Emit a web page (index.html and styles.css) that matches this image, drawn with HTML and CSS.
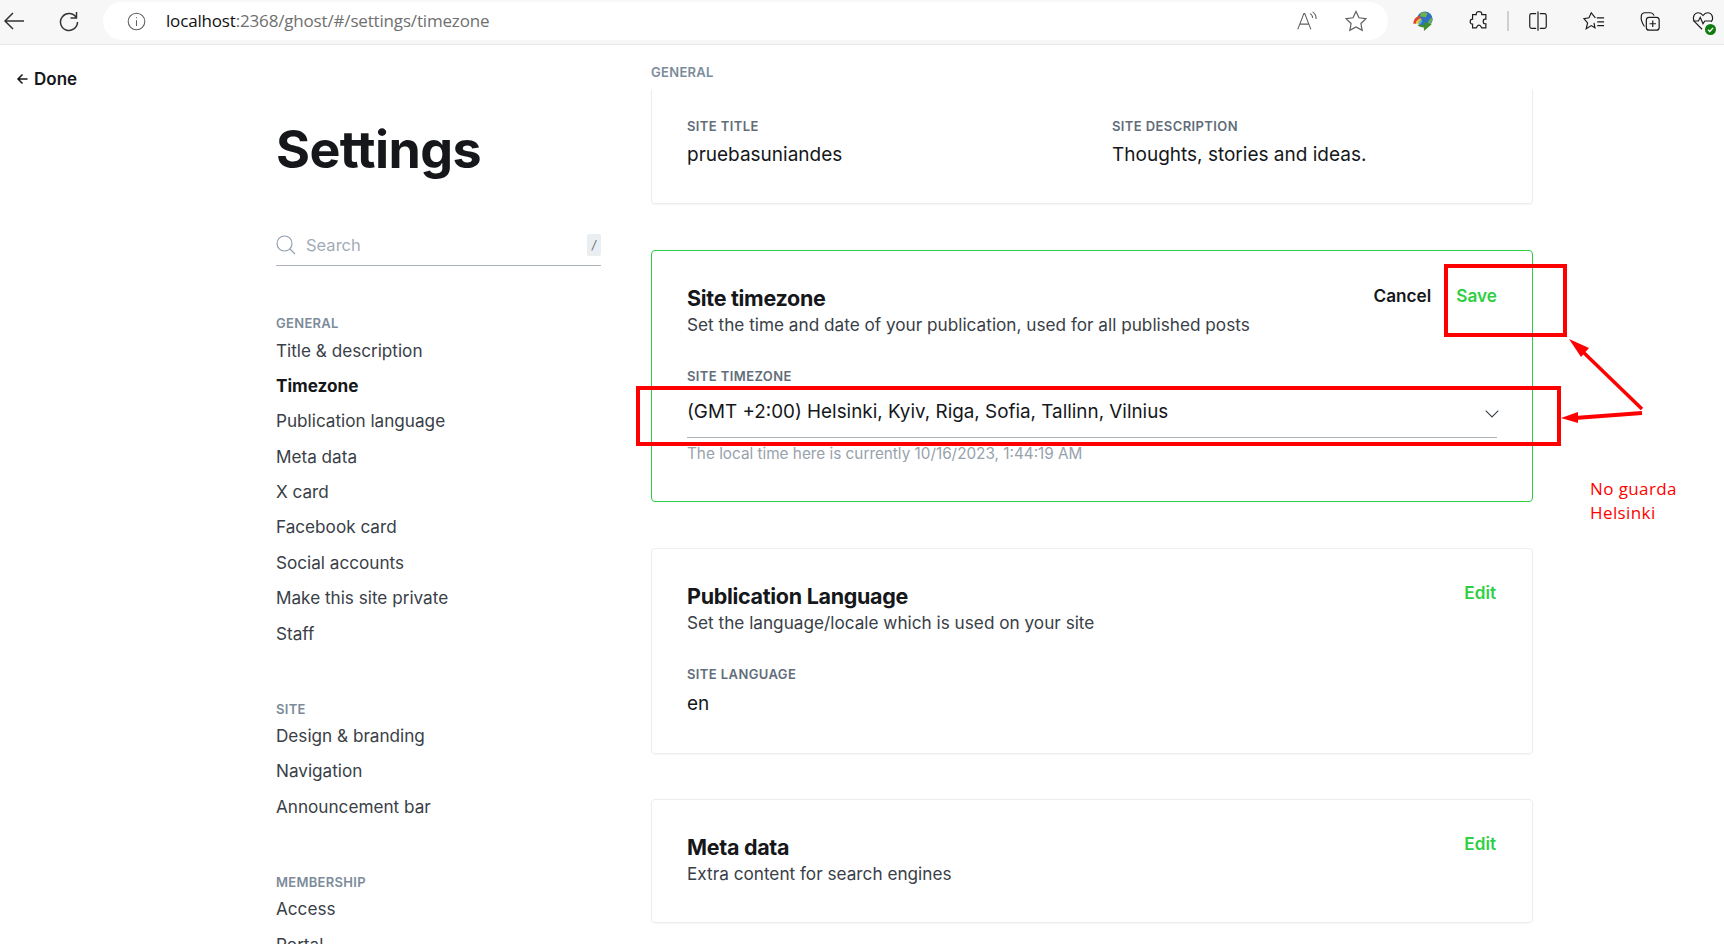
FILE: index.html
```html
<!DOCTYPE html>
<html lang="en">
<head>
    <meta charset="UTF-8">
    <title>Settings</title>
    <link rel="stylesheet" href="styles.css">
</head>
<body>

    <header class="topbar">
        <svg class="nav-icon" viewBox="0 0 24 24"><path d="M22 12H3M11 4l-8 8 8 8"/></svg>
        <svg class="nav-icon reload" viewBox="0 0 24 24"><path d="M19.5 9A8.5 8.5 0 1 0 20.5 13M19.5 3v6h-6"/></svg>
        <div class="address">
            <svg class="addr-icon" viewBox="0 0 24 24"><circle cx="12" cy="12" r="9.5"/><path d="M12 10.5V17M12 7v1.4"/></svg>
            <span class="url"><b>localhost</b>:2368/ghost/#/settings/timezone</span>
            <svg class="addr-icon read" viewBox="0 0 24 24"><path d="M2 21L9 3h1l7 18M4.800 15h10M16 3c2 1 3 3 3 5M19 1c3 2 4 5 4 8"/></svg>
            <svg class="addr-icon star" viewBox="0 0 24 24"><path d="M12 2.500l3 6.300 6.900 .9-5 4.800 1.300 6.900-6.200-3.400-6.200 3.400 1.300-6.900-5-4.800 6.900-.9z"/></svg>
        </div>
        <div class="tools">
            <svg class="tool idm" viewBox="0 0 24 24">
                <circle class="idm-blue" cx="14" cy="10" r="8.500"/>
                <path class="idm-green" d="M9 4c2-2 6-2 8 0l-2 4-6-1zM17 14l4-6 1 3-2 5z"/>
                <path class="idm-red" d="M1.500 15c0-5 3-8 7-8.500l1 2.500c-3 .5-5 3-5 6z"/>
                <path class="idm-yellow" d="M4.500 15c0-3 2-5.500 5-6l1 2c-2 .5-3 2-3 4z"/>
                <path class="idm-cyan" d="M7.500 15c0-2 1-3.500 3-4l1 1.500c-1 .5-1.500 1-1.500 2.500z"/>
                <path class="idm-arrow" d="M6 16h8l-.5-3 8 2.500-8.500 7.500v-4c-3 0-6-1-7-3z"/>
            </svg>
            <svg class="tool puzzle" viewBox="0 0 24 24"><path d="M9 4c0-3 6-3 6 0v1h4.500v5h-1c-2.500 0-2.500 5 0 5h1v4.500H15c-1-1-1-3-3-3s-2 2-3 3H5v-4c-3.500 0-3.500-5.500 0-5.500V5h4z"/></svg>
            <span class="divider"></span>
            <svg class="tool" viewBox="0 0 24 24"><path d="M10 4H5a2 2 0 0 0-2 2v12a2 2 0 0 0 2 2h5M14 4h5a2 2 0 0 1 2 2v12a2 2 0 0 1-2 2h-5M12 1.500v21"/></svg>
            <svg class="tool" viewBox="0 0 24 24"><path d="M13.500 8.500L9 3 6.500 8.500 1 9.500l4 4.500-1.500 6.500 5.500-3.500 4 2.500-1-5.500M15 8.500h8M15.500 13h7.500M15.500 17h7.500"/></svg>
            <svg class="tool coll" viewBox="0 0 24 24"><path d="M6 18C3 14 2 10 2.500 6.500c.3-2 2-3.500 4-3.500h6c2 0 3 1 4 3"/><rect x="8" y="8" width="14" height="14" rx="3"/><path d="M15 11.500v7M11.500 15h7"/></svg>
            <span class="tool-wrap">
                <svg class="tool" viewBox="0 0 24 24"><path d="M11 21L3 13C0 9 2 3 7 3c2 0 3.500 1 5 3 1.500-2 3-3 5-3 5 0 7 6 4 10M1 12h6l2-4 3 7 2-3h8"/></svg>
                <svg class="badge" viewBox="0 0 12 12"><circle class="badge-bg" cx="6" cy="6" r="6"/><path d="M3.300 6.200l2 2 3.500-4"/></svg>
            </span>
        </div>
    </header>

    <div class="layout">
        <div class="back-col">
            <a class="done" href="#">
                <svg class="done-arrow" viewBox="0 0 12 12"><path d="M11 6H1.500M6 1.500L1.500 6 6 10.500"/></svg>
                Done
            </a>
        </div>

        <aside class="sidebar">
            <h1>Settings</h1>
            <div class="search">
                <svg class="search-icon" viewBox="0 0 20 20"><circle cx="8.500" cy="8.500" r="7.500"/><path d="M14 14l5 5"/></svg>
                <span class="search-text">Search</span>
                <span class="kbd">/</span>
            </div>

            <div class="nav-group">
                <div class="nav-title">GENERAL</div>
                <a class="nav-item">Title &amp; description</a>
                <a class="nav-item active">Timezone</a>
                <a class="nav-item">Publication language</a>
                <a class="nav-item">Meta data</a>
                <a class="nav-item">X card</a>
                <a class="nav-item">Facebook card</a>
                <a class="nav-item">Social accounts</a>
                <a class="nav-item">Make this site private</a>
                <a class="nav-item">Staff</a>
            </div>

            <div class="nav-group">
                <div class="nav-title">SITE</div>
                <a class="nav-item">Design &amp; branding</a>
                <a class="nav-item">Navigation</a>
                <a class="nav-item">Announcement bar</a>
            </div>

            <div class="nav-group">
                <div class="nav-title">MEMBERSHIP</div>
                <a class="nav-item">Access</a>
                <a class="nav-item">Portal</a>
            </div>
        </aside>

        <main class="content">
            <div class="section-title">GENERAL</div>

            <section class="card card-first">
                <div class="field-row">
                    <div class="field">
                        <div class="field-label">SITE TITLE</div>
                        <div class="field-value">pruebasuniandes</div>
                    </div>
                    <div class="field">
                        <div class="field-label">SITE DESCRIPTION</div>
                        <div class="field-value">Thoughts, stories and ideas.</div>
                    </div>
                </div>
            </section>

            <section class="card card-editing">
                <div class="card-head">
                    <div>
                        <h2>Site timezone</h2>
                        <p>Set the time and date of your publication, used for all published posts</p>
                    </div>
                    <div class="actions">
                        <a class="btn btn-cancel">Cancel</a>
                        <a class="btn btn-save">Save</a>
                    </div>
                </div>
                <div class="field-label field-gap">SITE TIMEZONE</div>
                <div class="select">
                    <span>(GMT +2:00) Helsinki, Kyiv, Riga, Sofia, Tallinn, Vilnius</span>
                    <svg class="chevron" viewBox="0 0 14 8"><path d="M.7 .7L7 7l6.300-6.300"/></svg>
                </div>
                <div class="hint">The local time here is currently 10/16/2023, 1:44:19 AM</div>
            </section>

            <section class="card card-lang">
                <div class="card-head">
                    <div>
                        <h2>Publication Language</h2>
                        <p>Set the language/locale which is used on your site</p>
                    </div>
                    <a class="btn btn-edit">Edit</a>
                </div>
                <div class="field-label field-gap">SITE LANGUAGE</div>
                <div class="field-value">en</div>
            </section>

            <section class="card card-meta">
                <div class="card-head">
                    <div>
                        <h2>Meta data</h2>
                        <p>Extra content for search engines</p>
                    </div>
                    <a class="btn btn-edit">Edit</a>
                </div>
            </section>
        </main>
    </div>

    <!-- anotaciones en rojo sobre la captura -->
    <svg class="marks" viewBox="0 0 1724 944">
        <rect x="1446" y="266" width="119" height="69"/>
        <rect x="638" y="388" width="921" height="56"/>
        <path class="thin" d="M1642 409L1580 349"/>
        <path d="M1642 413L1575 418"/>
        <path class="tip" d="M1569 339L1589 348 1581 357zM1561 418L1578 412 1578 423z"/>
    </svg>
    <div class="note">No guarda<br>Helsinki</div>

</body>
</html>
```

FILE: styles.css
```css
* {
    box-sizing: border-box;
}

html, body {
    height: 100%;
}

body {
    margin: 0;
    height: 944px;
    overflow: hidden;
    position: relative;
    font-family: Inter, "Liberation Sans", sans-serif;
    color: #15171a;
    background-color: #fff;
}

svg {
    fill: none;
    stroke: currentColor;
}

/* barra del navegador */
.topbar {
    height: 45px;
    padding-bottom: 2px;
    display: flex;
    align-items: center;
    background-color: #f7f7f7;
    border-bottom: 1px solid #e9e9e9;
}

.nav-icon {
    width: 24px;
    height: 24px;
    margin-left: 2px;
    stroke: #333;
    stroke-width: 1.500;
    flex: none;
}

.reload {
    margin-left: 31px;
}

.address {
    width: 1285px;
    height: 38px;
    margin-left: 22px;
    display: flex;
    align-items: center;
    background-color: #fff;
    border-radius: 19px;
}

.addr-icon {
    width: 21px;
    height: 21px;
    margin-left: 23px;
    stroke: #5f5f5f;
    stroke-width: 1.200;
    flex: none;
}

.url {
    margin-left: 19px;
    margin-top: -1px;
    flex: 1;
    font-family: "Open Sans", sans-serif;
    font-size: 17px;
    letter-spacing: -.17px;
    color: #6f6f6f;
}

.url b {
    font-weight: 400;
    color: #111;
}

.addr-icon.read {
    margin-right: 27px;
}

.addr-icon.star {
    width: 24px;
    height: 24px;
    margin: 0 20px 0 0;
}

.tools {
    display: flex;
    align-items: center;
    margin-left: 24px;
}

.tool {
    width: 22px;
    height: 22px;
    stroke: #1d1d1d;
    stroke-width: 1.300;
    margin-right: 34px;
    flex: none;
    display: block;
}

.tool.puzzle {
    margin-right: 17px;
}

.tool.coll {
    margin-right: 31px;
}

.divider {
    width: 2px;
    height: 20px;
    background-color: #cfcfcf;
    margin-right: 18px;
}

.tool-wrap {
    position: relative;
}

.tool-wrap .tool {
    margin-right: 0;
}

.badge {
    position: absolute;
    right: -2px;
    bottom: -3px;
    width: 11px;
    height: 11px;
    stroke: #fff;
    stroke-width: 1.500;
}

.badge-bg {
    fill: #107c10;
    stroke: none;
}

.idm-blue { fill: #2f6fc4; stroke: none; }
.idm-green { fill: #6fb24a; stroke: none; }
.idm-red { fill: #e0452f; stroke: none; }
.idm-yellow { fill: #f0c430; stroke: none; }
.idm-cyan { fill: #4cc2d8; stroke: none; }
.idm-arrow { fill: #3f8f2c; stroke: none; }

/* columnas */
.layout {
    display: flex;
    height: 899px;
    overflow: hidden;
}

.back-col {
    width: 276px;
    padding: 24px 0 0 16px;
    flex: none;
}

.done {
    display: flex;
    align-items: center;
    gap: 5px;
    font-size: 17px;
    font-weight: 600;
    line-height: 20px;
    color: #15171a;
    text-decoration: none;
}

.done-arrow {
    width: 13px;
    height: 12px;
    stroke-width: 1.500;
}

.sidebar {
    width: 325px;
    flex: none;
}

h1 {
    margin: 0;
    padding-top: 75px;
    font-size: 52px;
    line-height: 60px;
    font-weight: 700;
    letter-spacing: -.6px;
}

.search {
    margin-top: 48px;
    height: 38px;
    display: flex;
    align-items: center;
    border-bottom: 1px solid #aeb4bb;
    padding-bottom: 4px;
}

.search-icon {
    width: 20px;
    height: 20px;
    stroke: #8e9cac;
    stroke-width: 1.100;
}

.search-text {
    margin-left: 10px;
    flex: 1;
    font-size: 16.500px;
    color: #a3acb6;
}

.kbd {
    width: 14px;
    height: 22px;
    line-height: 22px;
    text-align: center;
    background-color: #ebeef0;
    border-radius: 2px;
    font-size: 12px;
    font-style: italic;
    color: #5d6a77;
}

.nav-group {
    margin-top: 49px;
}

.nav-group + .nav-group {
    margin-top: 49.500px;
}

.nav-title {
    height: 16px;
    line-height: 16px;
    font-size: 13px;
    letter-spacing: .3px;
    font-weight: 600;
    color: #7c8b9a;
    margin-bottom: 1.500px;
}

.nav-item {
    display: block;
    height: 35.400px;
    line-height: 35.400px;
    font-size: 17.150px;
    color: #394047;
}

.nav-item.active {
    font-weight: 700;
    color: #15171a;
}

.content {
    width: 882px;
    margin-left: 50px;
    flex: none;
}

.section-title {
    padding-top: 19px;
    height: 45px;
    line-height: 16px;
    font-size: 13px;
    letter-spacing: .3px;
    font-weight: 600;
    color: #7c8b9a;
}

.card {
    border: 1px solid #ebeef0;
    border-radius: 4px;
    padding: 35px;
    margin-bottom: 46px;
    box-shadow: 0 1px 2px rgba(0, 0, 0, .04);
}

.card-first {
    height: 114px;
    padding-top: 28px;
    border-top: none;
    border-radius: 0 0 4px 4px;
}

.card-first .field-value {
    margin-top: 5px;
}

.card-editing {
    height: 252px;
    border-color: #30cf43;
    box-shadow: none;
}

.card-lang {
    height: 206px;
    margin-bottom: 44.500px;
}

.card-lang .field-value {
    margin-top: 6px;
}

.card-meta {
    height: 124px;
}

.field-row {
    display: grid;
    grid-template-columns: 425px 1fr;
}

.field-label {
    height: 16px;
    line-height: 16px;
    font-size: 13px;
    letter-spacing: .4px;
    font-weight: 600;
    color: #626d79;
}

.field-gap {
    margin-top: 31px;
}

.field-value {
    margin-top: 4px;
    line-height: 32px;
    font-size: 19px;
    color: #15171a;
}

.card-head {
    display: flex;
    justify-content: space-between;
    align-items: flex-start;
}

h2 {
    margin: 0;
    height: 27px;
    line-height: 24px;
    font-size: 21.500px;
    font-weight: 700;
    letter-spacing: -.3px;
}

.card-head p {
    margin: 0;
    line-height: 24px;
    font-size: 17.200px;
    color: #394047;
}

.actions {
    display: flex;
    gap: 25px;
}

.btn {
    line-height: 20px;
    font-size: 17.200px;
    font-weight: 600;
}

.btn-edit {
    margin: -1px 1px 0 0;
}

.btn-save,
.btn-edit {
    color: #30cf43;
}

.select {
    height: 54px;
    padding: 11.500px 0 0 0;
    display: flex;
    justify-content: space-between;
    border-bottom: 1px solid #aeb4bb;
    line-height: 32px;
    font-size: 18.850px;
    color: #15171a;
}

.chevron {
    width: 14px;
    height: 8px;
    margin: 14.800px -2px 0 0;
    stroke: #394047;
    stroke-width: 1.100;
}

.hint {
    margin-top: 7px;
    line-height: 18px;
    font-size: 15.300px;
    color: #98a2ac;
}

/* anotaciones */
.marks {
    position: absolute;
    left: 0;
    top: 0;
    width: 1724px;
    height: 944px;
    stroke: #f00;
    stroke-width: 4;
}

.marks .thin {
    stroke-width: 3.500;
}

.marks .tip {
    fill: #f00;
    stroke: none;
}

.note {
    position: absolute;
    left: 1590px;
    top: 477px;
    font-family: "Open Sans", sans-serif;
    font-size: 17px;
    letter-spacing: .4px;
    line-height: 24px;
    color: #f00;
}
```
